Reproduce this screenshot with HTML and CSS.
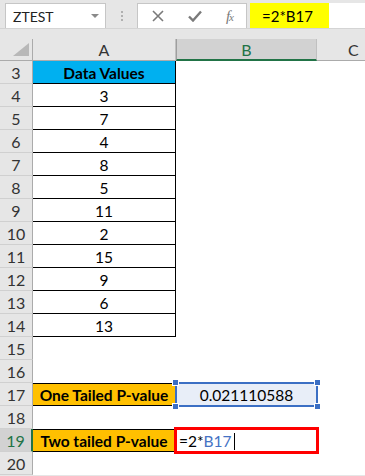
FILE: index.html
```html
<!DOCTYPE html>
<html lang="en">
<head>
    <meta charset="UTF-8">
    <meta name="viewport" content="width=device-width, initial-scale=1.0">
    <title>ZTEST</title>
    <link rel="stylesheet" href="styles.css">
</head>
<body>
    <div class="topbar">
        <div class="namebox">
            <span>ZTEST</span>
            <svg class="drop" width="8" height="5" viewBox="0 0 8 5"><polygon points="0,0 8,0 4,4" fill="#8a8a8a"/></svg>
        </div>
        <div class="grip">
            <i></i><i></i><i></i>
        </div>
        <div class="tools">
            <svg width="12" height="12" viewBox="0 0 12 12"><path d="M1 1 L11 11 M11 1 L1 11" stroke="#7a7a7a" stroke-width="1.6"/></svg>
            <svg width="14" height="12" viewBox="0 0 14 12"><path d="M1 6.5 L5 10.5 L13 1.5" stroke="#7a7a7a" stroke-width="2.4" fill="none"/></svg>
            <span class="fx">f<small>x</small></span>
        </div>
        <div class="formula">
            <span class="hilite">=2*B17</span>
        </div>
    </div>

    <div class="sheet">
        <div class="corner">
            <svg width="16" height="13" viewBox="0 0 16 13"><polygon points="16,0 16,13 0,13" fill="#b8b8b8"/></svg>
        </div>
        <div class="colhead">A</div>
        <div class="colhead sel">B</div>
        <div class="colhead last">C</div>

        <div class="rowhead">3</div>
        <div class="cell tbl title">Data Values</div>
        <div class="cell"></div>
        <div class="cell"></div>

        <div class="rowhead">4</div><div class="cell tbl">3</div><div class="cell"></div><div class="cell"></div>
        <div class="rowhead">5</div><div class="cell tbl">7</div><div class="cell"></div><div class="cell"></div>
        <div class="rowhead">6</div><div class="cell tbl">4</div><div class="cell"></div><div class="cell"></div>
        <div class="rowhead">7</div><div class="cell tbl">8</div><div class="cell"></div><div class="cell"></div>
        <div class="rowhead">8</div><div class="cell tbl">5</div><div class="cell"></div><div class="cell"></div>
        <div class="rowhead">9</div><div class="cell tbl">11</div><div class="cell"></div><div class="cell"></div>
        <div class="rowhead">10</div><div class="cell tbl">2</div><div class="cell"></div><div class="cell"></div>
        <div class="rowhead">11</div><div class="cell tbl">15</div><div class="cell"></div><div class="cell"></div>
        <div class="rowhead">12</div><div class="cell tbl">9</div><div class="cell"></div><div class="cell"></div>
        <div class="rowhead">13</div><div class="cell tbl">6</div><div class="cell"></div><div class="cell"></div>
        <div class="rowhead">14</div><div class="cell tbl">13</div><div class="cell"></div><div class="cell"></div>
        <div class="rowhead">15</div><div class="cell"></div><div class="cell"></div><div class="cell"></div>
        <div class="rowhead">16</div><div class="cell"></div><div class="cell"></div><div class="cell"></div>

        <div class="rowhead">17</div>
        <div class="cell tbl label">One Tailed P-value</div>
        <div class="cell active">
            0.021110588
            <i class="handle tl"></i><i class="handle tr"></i><i class="handle bl"></i><i class="handle br"></i>
        </div>
        <div class="cell"></div>

        <div class="rowhead">18</div><div class="cell"></div><div class="cell"></div><div class="cell"></div>

        <div class="rowhead sel">19</div>
        <div class="cell tbl label">Two tailed P-value</div>
        <div class="cell editing">=2*<span class="ref">B17</span><span class="caret"></span></div>
        <div class="cell"></div>

        <div class="rowhead">20</div><div class="cell"></div><div class="cell"></div><div class="cell"></div>
    </div>
</body>
</html>
```

FILE: styles.css
```css
body {
    margin: 0;
    height: 476px;
    overflow: hidden;
    background-color: #e6e6e6;
    font-family: Lato, "Open Sans", sans-serif;
    color: #000;
}
.topbar {
    display: flex;
    align-items: stretch;
    height: 25px;
    padding-top: 3px;
    border-bottom: 1px solid #d4d4d4;
    margin-bottom: 10px;
}
.namebox {
    display: flex;
    align-items: center;
    justify-content: space-between;
    width: 101px;
    margin-left: 5px;
    padding: 0 6px 0 7px;
    box-sizing: border-box;
    background-color: white;
    border: 1px solid #c6c6c6;
    border-bottom: none;
    font-size: 14px;
    color: #222;
}
.grip {
    display: flex;
    flex-direction: column;
    justify-content: center;
    gap: 2px;
    width: 31px;
    align-items: center;
}
.grip i {
    width: 2px;
    height: 2px;
    background-color: #b0b0b0;
}
.tools {
    display: flex;
    align-items: center;
    justify-content: space-between;
    width: 110px;
    padding: 0 13px 0 14px;
    box-sizing: border-box;
    background-color: white;
    border: 1px solid #c6c6c6;
    border-bottom: none;
}
.fx {
    font-family: "Liberation Serif", serif;
    font-style: italic;
    font-size: 15px;
    color: #7a7a7a;
    letter-spacing: -1px;
}
.fx small {
    font-size: 11px;
}
.formula {
    flex: 1;
    margin-left: 3px;
    background-color: white;
    display: flex;
}
.hilite {
    display: flex;
    align-items: center;
    width: 79px;
    padding-left: 12px;
    box-sizing: border-box;
    background-color: #ffff00;
    font-size: 15px;
}
.sheet {
    display: grid;
    grid-template-columns: 33px 143px 141px 1fr;
    grid-template-rows: 22px repeat(18, 23px);
    background-color: white;
}
.corner {
    display: flex;
    align-items: flex-end;
    justify-content: flex-end;
    padding: 0 3px 4px 0;
    background-color: #e6e6e6;
    border-right: 1px solid #ababab;
    border-bottom: 1px solid #ababab;
}
.colhead {
    display: flex;
    align-items: center;
    justify-content: center;
    background-color: #e6e6e6;
    border-right: 1px solid #c0c0c0;
    border-bottom: 1px solid #ababab;
    font-size: 16px;
    color: #333;
}
.colhead.sel {
    background-color: #d2d2d2;
    border-left: 1px solid #9e9e9e;
    border-bottom: 2px solid #217346;
    color: #217346;
}
.colhead.last {
    justify-content: flex-start;
    padding-left: 31px;
    border-right: none;
}
.rowhead {
    display: flex;
    align-items: center;
    justify-content: center;
    padding-top: 1px;
    background-color: #e6e6e6;
    border-right: 1px solid #ababab;
    border-bottom: 1px solid #d0d0d0;
    font-size: 16px;
    color: #333;
}
.rowhead.sel {
    background-color: #d2d2d2;
    border-right: 2px solid #217346;
    color: #217346;
}
.cell {
    display: flex;
    align-items: center;
    justify-content: center;
    position: relative;
    padding-top: 1px;
    font-size: 15.5px;
    white-space: nowrap;
}
.tbl {
    border-right: 1px solid #000;
    border-bottom: 1px solid #000;
    box-sizing: border-box;
}
.title {
    background-color: #00b0f0;
    font-weight: bold;
}
.label {
    background-color: #ffc000;
    font-weight: bold;
    border-top: 1px solid #000;
}
.active {
    background-color: #e8eef8;
}
.active::before {
    content: "";
    position: absolute;
    top: -1px;
    left: -1px;
    right: -1px;
    bottom: -1px;
    border: 2px solid #3b6fc4;
}
.handle {
    position: absolute;
    width: 5px;
    height: 5px;
    background-color: #3b6fc4;
    border: 1px solid white;
}
.handle.tl { top: -4px; left: -4px; }
.handle.tr { top: -4px; right: -4px; }
.handle.bl { bottom: -4px; left: -4px; }
.handle.br { bottom: -4px; right: -4px; }
.editing {
    justify-content: flex-start;
    padding-left: 3px;
}
.editing::before {
    content: "";
    position: absolute;
    top: -2px;
    left: -2px;
    right: -2px;
    bottom: -2px;
    border: 3px solid #ff0000;
}
.ref {
    color: #4472c4;
}
.caret {
    width: 1px;
    height: 17px;
    margin-left: 2px;
    background-color: #000;
}
```
